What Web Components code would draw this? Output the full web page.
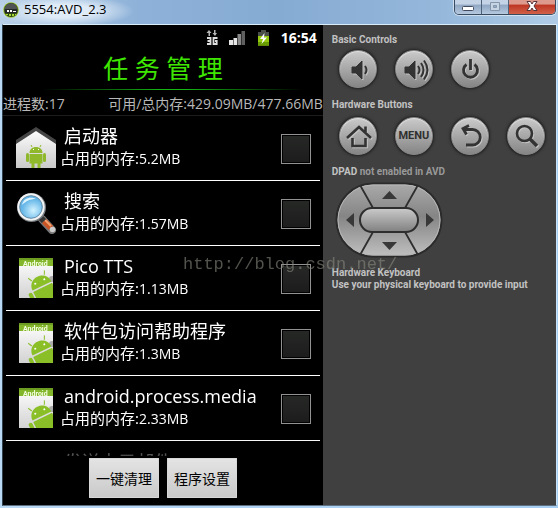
<!DOCTYPE html>
<html lang="zh-CN">
<head>
<meta charset="utf-8">
<title>5554:AVD_2.3</title>
<style>
  body { margin: 0; background: #a9c8e6; font-family: "Open Sans", "Noto Sans CJK SC", sans-serif; }
</style>
</head>
<body>
<emulator-window>
  <title-bar slot="title">5554:AVD_2.3</title-bar>
  <phone-screen slot="screen">
    <process-row icon="home" mem="5.2MB">启动器</process-row>
    <process-row icon="search" mem="1.57MB">搜索</process-row>
    <process-row icon="app" mem="1.13MB">Pico TTS</process-row>
    <process-row icon="app" mem="1.3MB">软件包访问帮助程序</process-row>
    <process-row icon="app" mem="2.33MB">android.process.media</process-row>
    <process-row icon="mail">发送电子邮件</process-row>
  </phone-screen>
  <control-panel slot="panel"></control-panel>
  <water-mark slot="mark">http://blog.csdn.net/</water-mark>
</emulator-window>

<script>
const define = (name, html, setup) => customElements.define(name, class extends HTMLElement {
  constructor() {
    super();
    this.attachShadow({ mode: 'open' });
  }
  connectedCallback() {
    this.shadowRoot.innerHTML = html;
    if (setup) setup(this, this.shadowRoot);
  }
});

define('emulator-window', `
<style>
  :host { display: grid; position: relative; box-sizing: border-box; height: 100vh; min-height: 480px;
    grid-template-rows: 24px minmax(0, 1fr); padding: 0 1px 2px 2px;
    background: linear-gradient(90deg, #b9d8f4, #a6cdf2); }
  .client { display: grid; grid-template-columns: minmax(0, 321fr) minmax(0, 234fr);
    border: 1px solid; border-color: #d9edfa #6d7f8f #5d6f7e #33414d; border-right-color: #c9e4f8; background: #404040; }
  ::slotted(*) { min-width: 0; min-height: 0; }
</style>
<slot name="title"></slot>
<div class="client"><slot name="screen"></slot><slot name="panel"></slot></div>
<slot name="mark"></slot>`);

define('title-bar', `
<style>
  :host { display: flex; align-items: flex-start; margin: 0 -1px 0 -2px; padding: 0 2px 0 3px;
    background: radial-gradient(ellipse 70px 16px at 64px 11px, #dfebf7 40%, transparent),
      linear-gradient(90deg, #b8cfe7 0, #8db1d8 25%, #86abd3 50%, #94b7da 78%, #afcbe6 100%);
    color: #000; font: 13px/19px "Open Sans", sans-serif; }
  .logo { width: 16px; height: 16px; margin: 2px 5px 0 0; }
  h1 { flex: 1; margin: 0; font: inherit; }
  .buttons { display: flex; height: 14px; border: 1px solid #384b60; border-top: 0; border-radius: 0 0 5px 5px;
    overflow: hidden; box-shadow: 0 0 0 1px #ffffff80; }
  button { display: grid; place-items: center; width: 27px; padding: 0; border: 0; border-right: 1px solid #4d6178;
    background: linear-gradient(#c4d3e5 0 30%, #8fa6c2 35%, #b5c9df); }
  button:last-child { width: 46px; border: 0; background: linear-gradient(#dd9a8c 0 30%, #bd3521 35%, #d2614a); }
  button svg { width: 14px; height: 13px; }
</style>
<svg class="logo" viewBox="0 0 16 16"><circle cx="8" cy="8" r="7.8" fill="#9cc52c"/><circle cx="8" cy="8" r="7" fill="#314616"/><path d="M2 10a6.4 6.4 0 1 1 12 0z" fill="#4f5353"/><path d="M2 7h12v4H2z" fill="#242826"/><path d="M4 8h2v2H4zm3 0h2v2H7zm3 1h3v1h-3z" fill="#fff"/><path d="M3 12h2v1H3zm3 0h2v2H6zm3 0h2v2H9zm3 0h1v1h-1z" fill="#a6d833"/></svg>
<h1><slot></slot></h1>
<div class="buttons">
  <button aria-label="Minimize"><svg viewBox="0 0 14 13"><rect x="1.5" y="5.500" width="11" height="4" rx="1" fill="#fff" stroke="#434b60"/></svg></button>
  <button aria-label="Maximize"><svg viewBox="0 0 14 13"><path d="M2.500 1.500h9v8h-9zM5.500 4.500h3v2h-3z" fill="#c7d4e3" stroke="#8396ac" fill-rule="evenodd"/></svg></button>
  <button aria-label="Close"><svg viewBox="0 0 14 13"><path d="M2 .5h3.500L7 3 8.500.5H12L9 5l3 4.500H8.500L7 7 5.500 9.500H2L5 5z" fill="#fff" stroke="#56343a"/></svg></button>
</div>`);

define('phone-screen', `
<style>
  :host { display: flex; flex-direction: column; background: #000; color: #fff; }
  .status { display: flex; align-items: center; justify-content: flex-end; gap: 11px; height: 25px; padding-right: 6px; flex: none; }
  .status svg { height: 16px; flex: none; }
  time { font-weight: 700; font-size: 14px; line-height: 24px; }
  h2 { margin: 0; padding-bottom: 3px; font-size: 25px; line-height: 36px; font-weight: 400; color: #3fe600; text-align: center; }
  .rule { height: 1px; flex: none; margin: 0 20px 0 40px; background: linear-gradient(90deg, #000, #12b512 45%, #12b512 55%, #000); }
  .totals { display: flex; justify-content: space-between; white-space: nowrap; font-size: 14px; line-height: 20px;
    padding: 4px 0 1px; color: #b8b8b8; border-bottom: 1px solid #1c1c1c; }
  .list { flex: 1 1 0; min-height: 0; overflow: hidden;
    -webkit-mask-image: linear-gradient(#000 calc(100% - 16px), #0004); mask-image: linear-gradient(#000 calc(100% - 16px), #0004); }
  .actions { display: flex; justify-content: center; gap: 8px; padding: 2px 0 7px; flex: none; }
  button { height: 40px; padding: 0 7px; border: 0; border-radius: 1px; color: #000; font: inherit; font-size: 14px;
    background: linear-gradient(#e4e4e4, #c9c9c9); box-shadow: inset 0 0 0 1px #d8d8d8; }
</style>
<div class="status">
  <svg width="12" viewBox="0 0 12 16"><path d="M3 0l2.500 3H4v3H2.500V3H.5zM9 6L6.500 3H8V0h1.500v3h1.500z" fill="#b5b5b5"/><path d="M1 8h3.500v6H1M1.500 11h3M11.500 8H7.500v6h3.200v-3H9" fill="none" stroke="#ddd" stroke-width="1.800"/></svg>
  <svg width="17" viewBox="0 0 17 16"><path d="M0 10h4v5H0zm4.500-2h3.500v7H4.500z" fill="#e6e6e6"/><path d="M8.500 4H12v11H8.500z" fill="#888"/><path d="M12.500 1H16v14h-3.500z" fill="#606060"/></svg>
  <svg width="13" viewBox="0 0 13 16"><path d="M4 0h5v2h3v13.500H1V2h3z" fill="#4a4f48"/><path d="M1 6h11v9.500H1z" fill="#93c90e"/><path d="M1 12h11v3.500H1z" fill="#679d00"/><path d="M7.500 3L3 9h3l-1.500 5L10 7.500H7z" fill="#fff"/></svg>
  <time>16:54</time>
</div>
<h2>任 务 管 理</h2>
<div class="rule"></div>
<div class="totals"><span>进程数:17</span><span>可用/总内存:429.09MB/477.66MB</span></div>
<div class="list"><slot></slot></div>
<div class="actions"><button>一键清理</button><button>程序设置</button></div>`);

const appIcons = {
  home: `<defs><linearGradient id="g" x2="0" y2="1"><stop stop-color="#fff"/><stop offset="1" stop-color="#c9c9c9"/></linearGradient></defs>
    <path d="M0 16L20 2l20 14v25H0z" fill="url(#g)"/><path d="M0 13L20 0l20 13v4L20 4 0 17z" fill="#454545"/>
    <g fill="#8fb82a"><path d="M13.500 26c0-8 13-8 13 0z"/><path d="M13.500 27h13v9.500h-13z"/><rect x="10" y="26" width="3" height="9" rx="1.500"/><rect x="27" y="26" width="3" height="9" rx="1.500"/><rect x="15.500" y="34" width="3" height="7"/><rect x="21.500" y="34" width="3" height="7"/></g>
    <path d="M16 20l-1-2m9 2l1-2" stroke="#8fb82a"/><path d="M17 22h1v1h-1zm5 0h1v1h-1z" fill="#fff"/>`,
  search: `<defs><radialGradient id="g" cx=".6" cy=".65"><stop stop-color="#d2f3ff"/><stop offset="1" stop-color="#64b6e8"/></radialGradient></defs>
    <path d="M26 27l10 11" stroke="#777" stroke-width="8" stroke-linecap="round"/><path d="M28 29l7 7" stroke="#c95424" stroke-width="6"/><path d="M29 28l6 6" stroke="#f4a06d" stroke-width="2"/><circle cx="36.500" cy="37.500" r="2.800" fill="#ccc"/><path d="M24 25l4 4" stroke="#333" stroke-width="6"/>
    <circle cx="15.500" cy="15.500" r="14.500" fill="#767c81"/><circle cx="15" cy="15" r="13.700" fill="#f3f3f3"/><circle cx="15" cy="15" r="11.300" fill="url(#g)" stroke="#648ca8"/><path d="M6 13c1-7 9-9 14-6-6 0-10 2-14 6z" fill="#dff6ff"/>`,
  app: `<defs><linearGradient id="g" x2="0" y2="1"><stop stop-color="#fff"/><stop offset="1" stop-color="#d2d2d2"/></linearGradient><clipPath id="c"><path d="M3 1h34v40H3z"/></clipPath></defs>
    <g clip-path="url(#c)"><path d="M3 1h34v40H3z" fill="url(#g)"/><path d="M3 1h34v8H3z" fill="#84b62b"/><path d="M3 1h34v2H3z" fill="#6d9d20"/>
    <text x="7" y="9" font-family="Roboto, sans-serif" font-size="7" font-weight="700" fill="#f3ffe0">Android</text>
    <circle cx="36" cy="22" r="3" fill="#aaa"/>
    <g transform="rotate(-26 26 29)" fill="#8abf28"><path d="M15.500 29c0-14 21-14 21 0z"/><path d="M15.500 30.500h21V48h-21z"/><rect x="10" y="30" width="4" height="15" rx="2"/><path d="M19 20l-2-4M33 20l2-4" stroke="#8abf28"/><circle cx="21" cy="24" r="1" fill="#fff"/><circle cx="31" cy="24" r="1" fill="#fff"/></g></g>`,
  mail: `<path d="M4 14L20 10l16 4v24H4z" fill="#777"/><path d="M13 15l7-5 7 5z" fill="#bbb"/>`
};

define('process-row', `
<style>
  :host { display: block; margin: 0 3px; border-bottom: 1px solid #fff; }
  label { display: flex; align-items: center; height: 64px; padding: 0 9px 0 10px; }
  svg { width: 40px; height: 42px; flex: none; }
  .text { flex: 1; min-width: 0; margin-left: 4px; padding-bottom: 3px; white-space: nowrap; }
  .name { display: block; padding-left: 4px; font-size: 18px; line-height: 24px; }
  .memory { display: block; min-height: 20px; font-size: 15px; line-height: 20px; }
  .value { font-size: 14px; }
  input { appearance: none; box-sizing: border-box; flex: none; width: 30px; height: 30px; margin: 2px 0 0;
    border: 1px solid #929292; background: linear-gradient(#262826, #1c1c1c); box-shadow: inset 0 0 0 1px #000; }
</style>
<label><svg viewBox="0 0 40 42" aria-hidden="true"></svg>
<span class="text"><span class="name"><slot></slot></span><span class="memory">占用的内存:<span class="value"></span></span></span>
<input type="checkbox"></label>`, (host, root) => {
  root.querySelector('svg').innerHTML = appIcons[host.getAttribute('icon')];
  if (host.hasAttribute('mem')) {
    root.querySelector('.value').textContent = host.getAttribute('mem');
  } else {
    root.querySelector('.memory').textContent = '';
  }
});

const glyphs = {
  quiet: '<path d="M12 16h4l6-6v18l-6-6h-4z" fill="#333"/><path d="M25 15q3 4 0 8" stroke-width="2"/>',
  loud: '<path d="M9 16h4l6-6v18l-6-6H9z" fill="#333"/><path d="M22 15q3 4 0 8M25 12q5 7 0 14M28 9.500q7 9.500 0 19" stroke-width="2"/>',
  power: '<path d="M14.500 13.500a7 7 0 1 0 8 0M18.500 8v11" stroke-width="2.800"/>',
  home: '<path d="M7 20L19 9l12 11M26 14V9M12 19v9h4.500v-5h5v5H26v-9" stroke-width="2.400"/>',
  back: '<path d="M17 8l-6 5 6 5M11 13h10a7 7 0 0 1 0 14h-7" stroke-width="2.800"/>',
  find: '<circle cx="16.500" cy="15.500" r="7.500" stroke-width="2.600"/><path d="M22 21l7 7" stroke-width="3.600"/>'
};
glyphs.home = '<path d="M7 20L19 9l12 11M25.500 14V8.500" stroke-width="2.600"/><path d="M12.500 20v8h13v-8" stroke-width="2.600"/>';
glyphs.back = '<path d="M17 7.500l-6 3 3.500 6M11 11.500h9.500a7.500 7.500 0 0 1 0 15.500H14" stroke-width="2.800"/>';

define('hardware-button', `
<style>
  :host { display: block; }
  button { display: grid; place-items: center; width: 38px; height: 38px; padding: 0; border: 1px solid #888; border-radius: 50%;
    background: linear-gradient(#cacaca, #858585); box-shadow: 0 0 0 1px #2c2c2c, 0 0 3px 1px #222, inset 0 1px 1px #e4e4e4;
    color: #303030; font: 700 11px/14px Roboto, sans-serif; }
  svg { width: 38px; height: 38px; fill: none; stroke: #333; filter: drop-shadow(1px 1px 0 #c4c4c4); }
</style>
<button></button>`, (host, root) => {
  const icon = host.getAttribute('icon');
  const button = root.querySelector('button');
  if (icon) {
    button.innerHTML = `<svg viewBox="0 0 38 38" aria-hidden="true">${glyphs[icon]}</svg>`;
    button.setAttribute('aria-label', host.getAttribute('label'));
  } else {
    button.textContent = host.getAttribute('label');
  }
});

define('direction-pad', `
<style>
  :host { display: block; width: 108px; height: 76px; }
  svg { display: block; width: 100%; height: 100%; }
</style>
<svg viewBox="0 0 108 76" role="img" aria-label="DPAD">
  <defs>
    <linearGradient id="v" x2="0" y2="1"><stop stop-color="#aaa"/><stop offset=".45" stop-color="#858585"/><stop offset="1" stop-color="#c0c0c0"/></linearGradient>
    <linearGradient id="h" x2="0" y2="1"><stop stop-color="#cbcbcb"/><stop offset="1" stop-color="#808080"/></linearGradient>
  </defs>
  <rect x="1.500" y="1.500" width="105" height="73" rx="36.500" fill="url(#v)" stroke="#2b2b2b" stroke-width="2"/>
  <rect x="3" y="3" width="102" height="70" rx="35" fill="none" stroke="#b7b7b7"/>
  <path d="M25 3l13 23M83 3L70 26M25 73l13-23M83 73L70 50" stroke="#2e2e2e" stroke-width="1.800"/>
  <rect x="25" y="26" width="58" height="24" rx="12" fill="url(#h)" stroke="#2e2e2e" stroke-width="2"/>
  <path d="M47 17h15l-7.500-8zM47 60h15l-7.500 8zM19 31v14l-8-7zM91 31v14l8-7z" fill="#383838"/>
</svg>`);

define('control-panel', `
<style>
  :host { display: block; padding: 9px 0 0 9px; background: #404040; color: #c2c2c2; font: 700 10px/12px Roboto, sans-serif; }
  h3 { margin: 0; font: inherit; }
  h3 span { color: #999; }
  .row { display: flex; gap: 18px; padding: 4px 0 11px 7px; }
  .row.hardware { padding: 6px 0 11px 7px; }
  direction-pad { margin: 4px 0 9px 3px; }
  p { margin: 0; white-space: nowrap; }
</style>
<h3>Basic Controls</h3>
<div class="row">
  <hardware-button icon="quiet" label="Volume down"></hardware-button>
  <hardware-button icon="loud" label="Volume up"></hardware-button>
  <hardware-button icon="power" label="Power"></hardware-button>
</div>
<h3>Hardware Buttons</h3>
<div class="row hardware">
  <hardware-button icon="home" label="Home"></hardware-button>
  <hardware-button label="MENU"></hardware-button>
  <hardware-button icon="back" label="Back"></hardware-button>
  <hardware-button icon="find" label="Search"></hardware-button>
</div>
<h3>DPAD <span>not enabled in AVD</span></h3>
<direction-pad></direction-pad>
<h3>Hardware Keyboard</h3>
<p>Use your physical keyboard to provide input</p>`);

define('water-mark', `
<style>
  :host { position: absolute; left: 183px; top: 253px; pointer-events: none; color: #8a8a80; opacity: .6;
    font: 17px/24px "Liberation Mono", monospace; white-space: nowrap; }
</style>
<slot></slot>`);
</script>
</body>
</html>
